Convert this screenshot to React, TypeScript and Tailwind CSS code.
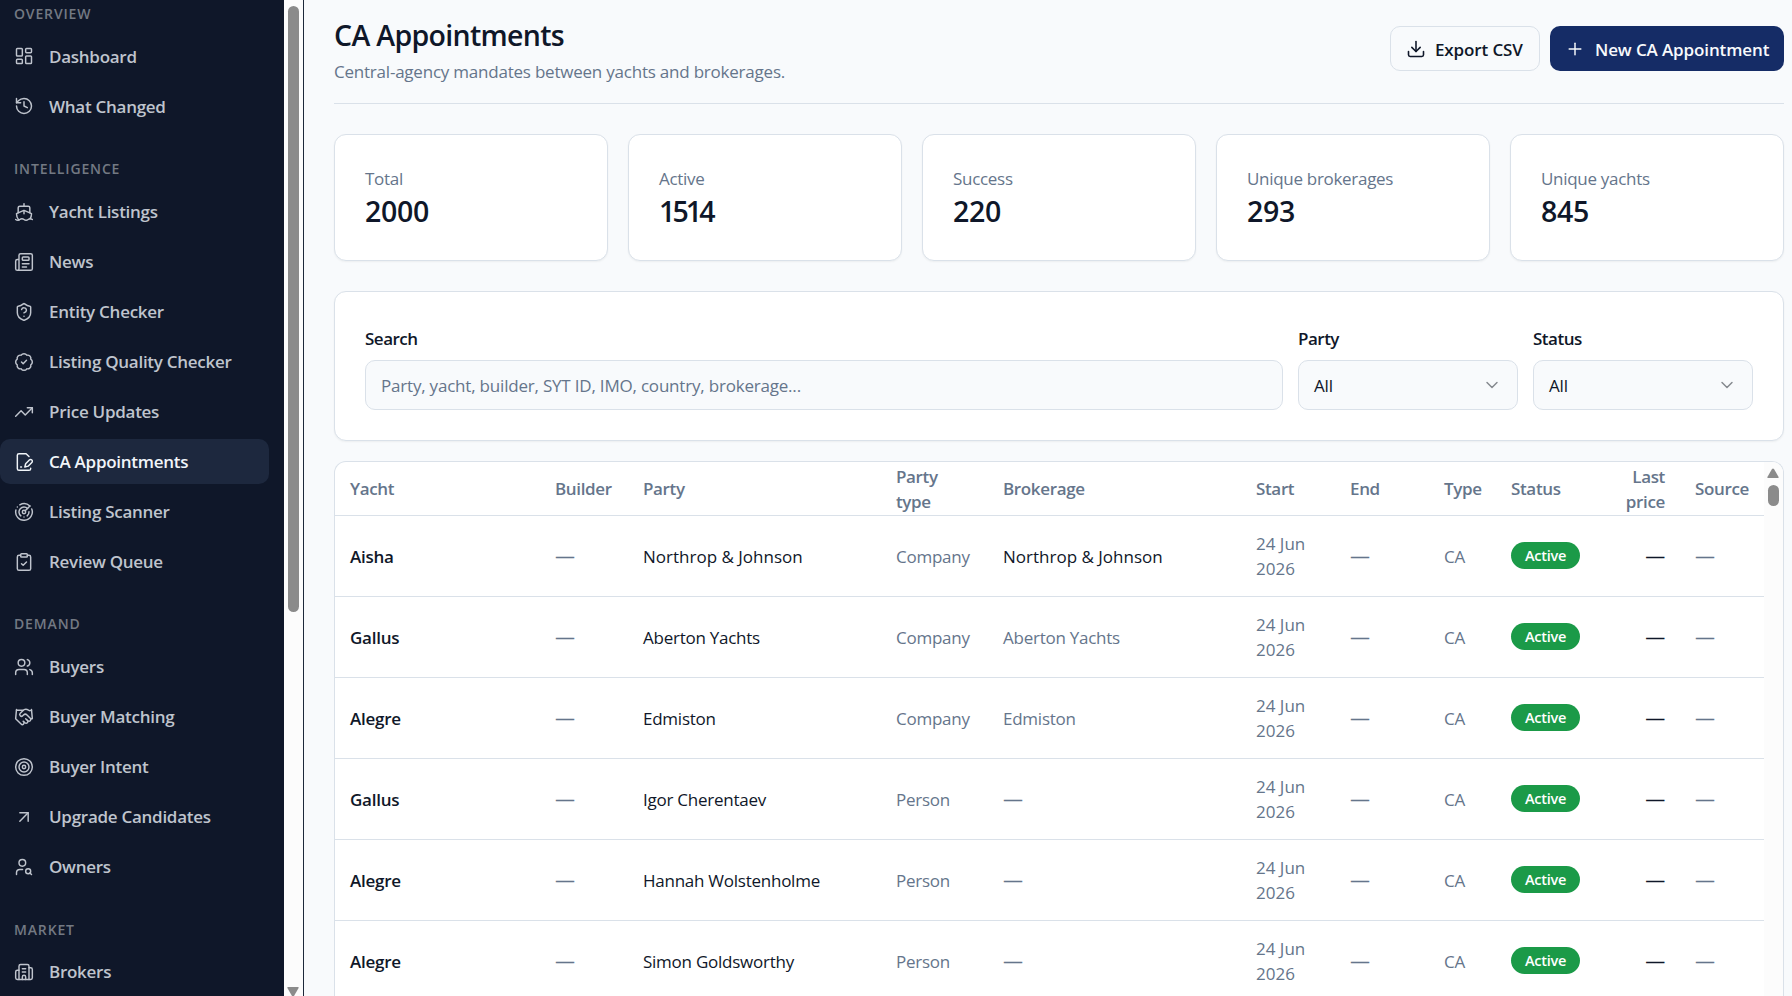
import {
  ArrowUpRight, BadgeCheck, Building2, ChevronDown, ClipboardCheck, Download, Handshake, History,
  LayoutDashboard, Newspaper, Plus, Radar, ShieldQuestionMark, Ship, Target, TrendingUp,
  UserSearch, Users,
} from "lucide-react";
import type { ComponentType, ReactNode } from "react";

type IconType = ComponentType<{ className?: string; strokeWidth?: number }>;

function FileSignature({ className, strokeWidth = 2 }: { className?: string; strokeWidth?: number }) {
  return (
    <svg viewBox="0 0 24 24" fill="none" stroke="currentColor" strokeWidth={strokeWidth} strokeLinecap="round" strokeLinejoin="round" className={className}>
      <path d="M20 19.5v.5a2 2 0 0 1-2 2H6a2 2 0 0 1-2-2V4a2 2 0 0 1 2-2h8.5L18 5.5" />
      <path d="M8 18h1" />
      <path d="M18.42 9.61a2.1 2.1 0 1 1 2.97 2.97L16.95 17 13 18l.99-3.95 4.43-4.44Z" />
    </svg>
  );
}

const groups: { label: string; items: [string, IconType][] }[] = [
  { label: "OVERVIEW", items: [["Dashboard", LayoutDashboard], ["What Changed", History]] },
  {
    label: "INTELLIGENCE",
    items: [
      ["Yacht Listings", Ship], ["News", Newspaper], ["Entity Checker", ShieldQuestionMark],
      ["Listing Quality Checker", BadgeCheck], ["Price Updates", TrendingUp],
      ["CA Appointments", FileSignature], ["Listing Scanner", Radar], ["Review Queue", ClipboardCheck],
    ],
  },
  {
    label: "DEMAND",
    items: [
      ["Buyers", Users], ["Buyer Matching", Handshake], ["Buyer Intent", Target],
      ["Upgrade Candidates", ArrowUpRight], ["Owners", UserSearch],
    ],
  },
  { label: "MARKET", items: [["Brokers", Building2]] },
];

function Sidebar() {
  return (
    <aside className="flex h-full w-[304px] shrink-0 border-r border-[#1d283a] bg-[#0f1729]">
      <nav className="flex-1 overflow-hidden pt-[3.75px]">
        {groups.map((g) => (
          <div key={g.label} className="mb-[30.25px]">
            <div className="h-5 pl-3.5 text-[14px] leading-5 font-semibold tracking-[0.85px] text-[#737983]">{g.label}</div>
            <div className="mt-[10px] flex flex-col gap-[5px]">
              {g.items.map(([name, Icon]) => (
                <a
                  key={name}
                  className={
                    name === "CA Appointments"
                      ? "flex h-[45px] w-[269px] items-center gap-[15px] rounded-[10px] bg-[#1d283e] pl-3.5 text-[#f1f5f9]"
                      : "flex h-[45px] w-[269px] items-center gap-[15px] rounded-[10px] pl-3.5 text-[#bfc4cd]"
                  }
                >
                  <Icon className="size-5 shrink-0" strokeWidth={1.75} />
                  <span className="text-[17px] font-semibold tracking-[-0.27px] whitespace-nowrap">{name}</span>
                </a>
              ))}
            </div>
          </div>
        ))}
      </nav>
      <div className="relative w-[19px] bg-[#fcfcfc]">
        <div className="ml-1 mt-1.5 h-[606px] w-[11px] rounded-full bg-[#8b8b8b]" />
        <svg viewBox="0 0 12 10" className="absolute -bottom-px left-[3px] h-2.5 w-3 fill-[#8b8b8b]"><path d="M1 0H11Q12 0 11.6 1L7 9Q6 10 5 9L.4 1Q0 0 1 0Z" /></svg>
      </div>
    </aside>
  );
}

const stats = [["Total", "2000"], ["Active", "1514"], ["Success", "220"], ["Unique brokerages", "293"], ["Unique yachts", "845"]];

function Select({ label }: { label: string }) {
  return (
    <div className="w-[220px]">
      <div className="text-[17px] leading-[25px] font-semibold tracking-[-0.5px]">{label}</div>
      <div className="mt-[9px] flex h-[50px] items-center justify-between rounded-[10px] border border-[#dae1e9] bg-[#f8fafc] px-[15px] text-[17px] tracking-[-0.2px]">
        <span className="pt-0.5">All</span>
        <ChevronDown className="size-5 text-[#85898f]" strokeWidth={1.75} />
      </div>
    </div>
  );
}

const rows = [
  ["Aisha", "Northrop & Johnson", "Company", "Northrop & Johnson"],
  ["Gallus", "Aberton Yachts", "Company", "Aberton Yachts"],
  ["Alegre", "Edmiston", "Company", "Edmiston"],
  ["Gallus", "Igor Cherentaev", "Person", "—"],
  ["Alegre", "Hannah Wolstenholme", "Person", "—"],
  ["Alegre", "Simon Goldsworthy", "Person", "—"],
];

function Th({ children, className = "" }: { children: ReactNode; className?: string }) {
  return <th className={"px-[15px] pt-px align-middle font-semibold tracking-[-0.35px] " + className}>{children}</th>;
}

function Td({ children, className = "" }: { children: ReactNode; className?: string }) {
  return <td className={"px-[15px] pt-px align-middle whitespace-nowrap " + className}>{children}</td>;
}

function Dash() {
  return <span className="text-[20px]">—</span>;
}

function AppointmentsTable() {
  return (
    <section className="mt-5 flex min-h-0 flex-1 overflow-hidden rounded-t-[12px] border border-b-0 border-[#dae1e9] bg-white">
      <div className="w-[1429px] overflow-hidden">
        <table className="w-full table-fixed border-collapse text-left text-[17px] leading-[25px] tracking-[-0.25px]">
          <colgroup>
            <col className="w-[205px]" /><col className="w-[88px]" /><col className="w-[253px]" />
            <col className="w-[107px]" /><col className="w-[253px]" /><col className="w-[94px]" />
            <col className="w-[94px]" /><col className="w-[67px]" /><col className="w-[99px]" />
            <col className="w-[85px]" /><col className="w-[84px]" />
          </colgroup>
          <thead>
            <tr className="h-[53px] border-b border-[#dae1e9] text-[#65758b]">
              <Th>Yacht</Th><Th>Builder</Th><Th>Party</Th><Th>Party type</Th><Th>Brokerage</Th>
              <Th>Start</Th><Th>End</Th><Th>Type</Th><Th>Status</Th>
              <Th className="text-right">Last price</Th><Th>Source</Th>
            </tr>
          </thead>
          <tbody className="text-[#65758b]">
            {rows.map(([yacht, party, type, brokerage], i) => (
              <tr key={i} className="h-[81px] border-b border-[#dae1e9]">
                <Td className="font-semibold text-[#0f1729]">{yacht}</Td>
                <Td><Dash /></Td>
                <Td className={i === 0 ? "tracking-[0px] text-[#0f1729]" : "text-[#0f1729]"}>{party}</Td>
                <Td>{type}</Td>
                <Td className={i === 0 ? "tracking-[0px] text-[#0f1729]" : ""}>{brokerage === "—" ? <Dash /> : brokerage}</Td>
                <Td className="tracking-[0px]">24 Jun<br />2026</Td>
                <Td><Dash /></Td>
                <Td>CA</Td>
                <Td>
                  <span className="mb-0.5 flex h-[27px] w-[69px] items-center justify-center rounded-full bg-[#1b9a48] text-[14.5px] font-semibold text-white">Active</span>
                </Td>
                <Td className="text-right text-[#0f1729]"><Dash /></Td>
                <Td><Dash /></Td>
              </tr>
            ))}
          </tbody>
        </table>
      </div>
      <div className="w-[19px] bg-[#fcfcfc] pt-[6px]">
        <svg viewBox="0 0 12 10" className="ml-[3px] h-2.5 w-3 fill-[#8b8b8b]"><path d="M1 10H11Q12 10 11.6 9L7 1Q6 0 5 1L.4 9Q0 10 1 10Z" /></svg>
        <div className="mt-[7px] ml-1 h-[21px] w-[11px] rounded-full bg-[#8b8b8b]" />
      </div>
    </section>
  );
}

export default function App() {
  return (
    <div className="flex h-[996px] w-[1792px] overflow-hidden bg-[#f8fafc] font-['Open_Sans',sans-serif] text-[#0f1729]">
      <Sidebar />
      <main className="flex min-w-0 flex-1 flex-col pr-2 pl-[30px]">
        <header className="flex h-[104px] shrink-0 items-start justify-between border-b border-[#dae1e9]">
          <div className="pt-[15px]">
            <h1 className="text-[28.5px] leading-[40px] font-semibold tracking-[-0.68px]">CA Appointments</h1>
            <p className="mt-1 text-[17px] leading-[25px] tracking-[-0.22px] text-[#65758b]">Central-agency mandates between yachts and brokerages.</p>
          </div>
          <div className="flex gap-2.5 pt-[26px] text-[17px] font-semibold tracking-[-0.12px] whitespace-nowrap">
            <button className="flex h-[45px] w-[150px] items-center gap-[9px] rounded-[10px] border border-[#dae1e9] pl-[15px]">
              <Download className="size-5 shrink-0" strokeWidth={1.9} />
              <span className="pt-0.5">Export CSV</span>
            </button>
            <button className="flex h-[45px] w-[234px] items-center gap-[10px] rounded-[10px] bg-[#152c66] pl-[15px] text-[#f8fafc]">
              <Plus className="size-5 shrink-0" strokeWidth={1.75} />
              <span className="pt-0.5">New CA Appointment</span>
            </button>
          </div>
        </header>
        <div className="mt-[30px] grid shrink-0 grid-cols-5 gap-5">
          {stats.map(([label, value]) => (
            <div key={label} className="h-[127px] rounded-[12px] border border-[#dae1e9] bg-white px-[30px] pt-[31px] shadow-xs">
              <div className="text-[17px] leading-[25px] tracking-[-0.3px] text-[#65758b]">{label}</div>
              <div className={value === "1514" ? "text-[28.5px] leading-[40px] font-semibold tracking-[-2.9px]" : "text-[28.5px] leading-[40px] font-semibold tracking-[-0.3px]"}>{value}</div>
            </div>
          ))}
        </div>
        <div className="mt-[30px] flex h-[150px] shrink-0 gap-[15px] rounded-[12px] border border-[#dae1e9] bg-white px-[30px] pt-[34px] shadow-xs">
          <div className="flex-1">
            <div className="text-[17px] leading-[25px] font-semibold tracking-[-0.5px]">Search</div>
            <div className="mt-[9px] flex h-[50px] items-center rounded-[10px] border border-[#dae1e9] bg-[#f8fafc] px-[15px] pt-0.5 text-[17px] tracking-[-0.2px] text-[#65758b]">
              Party, yacht, builder, SYT ID, IMO, country, brokerage...
            </div>
          </div>
          <Select label="Party" />
          <Select label="Status" />
        </div>
        <AppointmentsTable />
      </main>
    </div>
  );
}
